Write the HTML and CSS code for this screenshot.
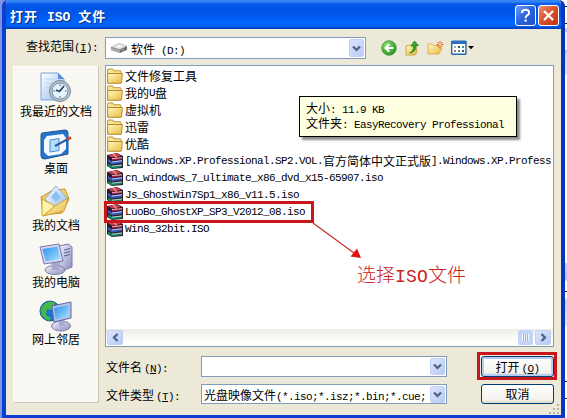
FILE: index.html
```html
<!DOCTYPE html>
<html lang="zh-CN">
<head>
    <meta charset="UTF-8">
    <title>打开 ISO 文件</title>
    <link rel="stylesheet" href="styles.css">
</head>
<body>
    <!-- Shared icons -->
    <svg class="defs" width="0" height="0">
        <defs>
            <linearGradient id="gold" x1="0" y1="0" x2="1" y2="1">
                <stop offset="0" stop-color="#fffbc4"/>
                <stop offset="1" stop-color="#e9b83c"/>
            </linearGradient>
            <linearGradient id="paper" x1="0" y1="0" x2="1" y2="1">
                <stop offset="0" stop-color="#ffffff"/>
                <stop offset="1" stop-color="#8fb9ec"/>
            </linearGradient>
            <linearGradient id="screen" x1="0" y1="0" x2="1" y2="1">
                <stop offset="0" stop-color="#2f8cf0"/>
                <stop offset="1" stop-color="#a5e6ff"/>
            </linearGradient>
            <linearGradient id="metal" x1="0" y1="0" x2="1" y2="1">
                <stop offset="0" stop-color="#f4f4ff"/>
                <stop offset="1" stop-color="#8a8dbb"/>
            </linearGradient>
            <radialGradient id="green" cx=".35" cy=".3" r=".8">
                <stop offset="0" stop-color="#8fe06c"/>
                <stop offset="1" stop-color="#1c8a20"/>
            </radialGradient>
            <symbol id="folder" viewBox="0 0 16 14" preserveAspectRatio="none">
                <path d="M.5 12.5V2Q.5 .8 1.5 .8H5.5L7 2.5H13Q14 2.5 14 3.5V12.5Z" fill="#f9e391" stroke="#b9953a" stroke-width=".9"/>
                <path d="M.7 13.3V5.5Q.7 4.8 1.5 4.8H14.5Q15.4 4.8 15.3 5.6L14.6 12.5Q14.5 13.3 13.6 13.3Z" fill="url(#gold)" stroke="#b3882a" stroke-width=".9"/>
            </symbol>
            <symbol id="archive" viewBox="0 0 16 16">
                <path d="M0 2L10 0L16 3V15L5 16L0 13Z" fill="#2a1a28"/>
                <path d="M1 2L10 .3L14 3L5 4.6Z" fill="#d63a63"/>
                <path d="M5 5L15 4V6L5 7.5Z" fill="#a31a48"/>
                <path d="M1 6L5 8.3L15 7V10L5 11.5L1 9Z" fill="#3a57b8"/>
                <path d="M5 9L15 7.7" stroke="#dfe6ff" stroke-width=".8"/>
                <path d="M1 10.5L5 12.5L15 11.3V14L5 15.5L1 13Z" fill="#138463"/>
                <path d="M5 13.2L15 12M5 5.7L15 4.7" stroke="#f2f2f2" stroke-width=".7"/>
                <path d="M6 1L9 3.6V5" stroke="#e0b13f" stroke-width="1.2" fill="none"/>
            </symbol>
            <symbol id="chevron" viewBox="0 0 9 7">
                <path d="M1 1.5L4.5 5L8 1.5" fill="none" stroke="#4d6185" stroke-width="2.2"/>
            </symbol>
        </defs>
    </svg>

    <div class="backdrop">
        <i class="tick t1"></i><i class="tick t2"></i><i class="tick t3"></i><i class="tick t4"></i><i class="tick t5"></i>
    </div>

    <div class="dialog">
        <!-- Title bar -->
        <header class="titlebar">
            <h1>打开 <span class="en">ISO</span> 文件</h1>
            <button class="win-btn help"><svg width="19" height="19" viewBox="0 0 19 19"><path d="M6 7Q6 3.8 9.6 3.8T13 7Q13 8.6 11.2 9.4Q9.6 10.2 9.6 12" fill="none" stroke="#fff" stroke-width="2"/><rect x="8.5" y="13.5" width="2.2" height="2.2" fill="#fff"/></svg></button>
            <button class="win-btn close"><svg width="19" height="19" viewBox="0 0 19 19"><path d="M5 5L14 14M14 5L5 14" stroke="#fff" stroke-width="2.3"/></svg></button>
        </header>

        <div class="client">
            <!-- Look in -->
            <div class="toolbar">
                <label>查找范围<span class="en">(<u>I</u>):</span></label>
                <div class="combo look-in">
                    <svg class="drive" width="17" height="12" viewBox="0 0 17 12"><path d="M0 5L8 1L16 4V8L9 11L0 8Z" fill="#6f7173"/><path d="M0 5L8 1L16 4L9 7.5Z" fill="#d8d9da"/><path d="M0 5.5L9 8V11L0 8Z" fill="#a8aaab"/><path d="M4 5L8 3L12 4L8.5 5.8Z" fill="#f7f7f7"/><rect x="11" y="7.5" width="2" height="1" fill="#8fd478"/></svg>
                    <span>软件<span class="en"> (D:)</span></span>
                    <button class="drop"><svg width="9" height="7"><use href="#chevron"/></svg></button>
                </div>
                <div class="tools">
                    <svg width="16" height="16" viewBox="0 0 16 16"><circle cx="8" cy="8" r="7.3" fill="url(#green)" stroke="#3d9a3a" stroke-width=".8"/><path d="M12.5 8H5M8.3 4.2L4.5 8L8.3 11.8" fill="none" stroke="#fff" stroke-width="2"/></svg>
                    <svg width="16" height="16" viewBox="0 0 16 16"><path d="M2 15V6L6 5L7 6L12 5L13 12L11 15Z" fill="url(#gold)" stroke="#c59a35" stroke-width=".8"/><path d="M5.5 13Q10 11 9.5 6H7L10.5 1L14.5 5.5H12Q12.5 12 5.5 13Z" fill="#35a82c" stroke="#1b751b" stroke-width=".7"/></svg>
                    <svg width="17" height="16" viewBox="0 0 17 16"><path d="M1 14V4H5L6.5 5.5H12V8H15L12 14Z" fill="url(#gold)" stroke="#d3a440" stroke-width=".8"/><path d="M13 1V8M9.5 4.5H16.5M10.5 2L15.5 7M15.5 2L10.5 7" stroke="#e8642c" stroke-width="1"/><circle cx="13" cy="4.5" r="1.3" fill="#ffd98a"/></svg>
                    <svg width="24" height="16" viewBox="0 0 24 16"><rect x=".7" y="1.2" width="14.2" height="13" rx=".8" fill="#fff" stroke="#2467ad" stroke-width="1.4"/><path d="M0 1H15.6V4H0Z" fill="#2b6fc0"/><path d="M3 6H5V8H3Z" fill="#a5b3b8"/><path d="M7 6H9V8H7ZM11 10H13V12H11Z" fill="#31567f"/><path d="M11 6H13V8H11ZM7 10H9V12H7Z" fill="#3f9a63"/><path d="M3 10H5V12H3Z" fill="#d66a50"/><path d="M17 6H23L20 9.2Z" fill="#000"/></svg>
                </div>
            </div>

            <div class="main">
                <!-- Places bar -->
                <nav class="places">
                    <a>
                        <svg width="34" height="34" viewBox="0 0 34 34"><path d="M2 2H19L25 8V29H2Z" fill="url(#paper)" stroke="#7ba3dc"/><path d="M19 2V8H25Z" fill="#5b8fdb"/><path d="M6 8H16M6 12H15M6 16H12M6 20H11" stroke="#c0d5f0"/><circle cx="21" cy="20" r="10.5" fill="#b9c0c9" stroke="#7b8794"/><circle cx="21" cy="20" r="8" fill="#e3f4ff" stroke="#7894ab"/><path d="M25 15L20.5 20.5L17 19" fill="none" stroke="#24445f" stroke-width="1.8"/><path d="M21 13.5V15M21 25V26.5M14.5 20H16M26 20H27.5" stroke="#446"/></svg>
                        <span>我最近的文档</span>
                    </a>
                    <a>
                        <svg width="34" height="34" viewBox="0 0 34 34"><path d="M3 5L26 2Q29 2 29 5V26L6 31Q2 31 2 28V8Q2 5 3 5Z" fill="#2475c8" stroke="#1a5299"/><path d="M8 8L24 6L27 10V21L22 26L9 28L5 24V12Z" fill="#f4faff"/><path d="M11 12L20 10.5V22.5L11 24Z" fill="#b7dcfa" stroke="#3c8fda"/><path d="M16 18L29 11" stroke="#285f9b" stroke-width="2"/><path d="M28 11.5L32 9.5" stroke="#d4482e" stroke-width="3"/></svg>
                        <span>桌面</span>
                    </a>
                    <a>
                        <svg width="34" height="34" viewBox="0 0 34 34"><path d="M2 12L14 5L26 4L30 14L23 28L4 30Z" fill="#f3cf66" stroke="#c3962f"/><path d="M6 14L17 1L28 13L17 26Z" fill="url(#paper)" stroke="#86b1dd"/><path d="M12 12L17 6L22 12L17 17Z" fill="#8cc1f2"/><path d="M3 14L16 21L4 31Q3 31 3 29Z" fill="#fff3a8" stroke="#cfa23a"/><path d="M16 21L29 13L25 26L4 31Z" fill="url(#gold)" stroke="#cfa23a"/></svg>
                        <span>我的文档</span>
                    </a>
                    <a>
                        <svg width="34" height="34" viewBox="0 0 34 34"><path d="M20 4L29 2L33 5V25L25 28L20 25Z" fill="url(#metal)" stroke="#7779a8"/><path d="M25 8L31 6.5M25 11L31 9.5M25 14L31 12.5" stroke="#555b95"/><ellipse cx="16" cy="28" rx="10" ry="4.5" fill="url(#metal)" stroke="#8083b2"/><path d="M12 20H19L20 28H13Z" fill="#a4a6cf"/><path d="M1 5L20 2L24 19L5 22Z" fill="#d7d9f2" stroke="#7476ab"/><path d="M3.5 7L18.5 4.5L21.5 17L6.5 19.5Z" fill="url(#screen)"/></svg>
                        <span>我的电脑</span>
                    </a>
                    <a>
                        <svg width="34" height="34" viewBox="0 0 34 34"><circle cx="11" cy="12" r="10" fill="#1e72d2" stroke="#16508e"/><path d="M3 7Q10 0 16 4L13 11L8 10L7 16L12 19L10 22Q1 18 1.5 11Z" fill="#46b84a"/><ellipse cx="22" cy="27" rx="9.5" ry="5" fill="url(#metal)" stroke="#7b7cad"/><path d="M20 19H25L26 27H20Z" fill="#a8a9d1"/><path d="M13 7L32 3V19L15 23Z" fill="#b5c5ea" stroke="#5b65a0"/><path d="M15 9L29.5 6V17.5L16.5 20.5Z" fill="url(#screen)"/></svg>
                        <span>网上邻居</span>
                    </a>
                </nav>

                <div class="right">
                    <!-- File list -->
                    <div class="file-list">
                        <ul>
                            <li><svg><use href="#folder"/></svg>文件修复工具</li>
                            <li><svg><use href="#folder"/></svg>我的<span class="en">U</span>盘</li>
                            <li><svg><use href="#folder"/></svg>虚拟机</li>
                            <li><svg><use href="#folder"/></svg>迅雷</li>
                            <li><svg><use href="#folder"/></svg>优酷</li>
                            <li><svg><use href="#archive"/></svg><span class="en">[Windows.XP.Professional.SP2.VOL.</span>官方简体中文正式版<span class="en">].Windows.XP.Profess:</span></li>
                            <li><svg><use href="#archive"/></svg><span class="en">cn_windows_7_ultimate_x86_dvd_x15-65907.iso</span></li>
                            <li><svg><use href="#archive"/></svg><span class="en">Js_GhostWin7Sp1_x86_v11.5.iso</span></li>
                            <li><svg><use href="#archive"/></svg><span class="en">LuoBo_GhostXP_SP3_V2012_08.iso</span></li>
                            <li><svg><use href="#archive"/></svg><span class="en">Win8_32bit.ISO</span></li>
                        </ul>
                        <div class="scrollbar">
                            <button class="drop left"><svg width="9" height="7"><use href="#chevron"/></svg></button>
                            <span class="thumb"></span>
                            <button class="drop next"><svg width="9" height="7"><use href="#chevron"/></svg></button>
                        </div>
                    </div>

                    <!-- File name and type -->
                    <div class="fields">
                        <label>文件名<span class="en key">(<u>N</u>):</span></label>
                        <div class="combo">
                            <button class="drop"><svg width="9" height="7"><use href="#chevron"/></svg></button>
                        </div>
                        <button class="push default">打开<span class="en key">(<u>O</u>)</span></button>
                        <label>文件类型<span class="en key">(<u>T</u>):</span></label>
                        <div class="combo">
                            <span class="type">光盘映像文件<span class="en">(*.iso;*.isz;*.bin;*.cue;</span></span>
                            <button class="drop"><svg width="9" height="7"><use href="#chevron"/></svg></button>
                        </div>
                        <button class="push">取消</button>
                    </div>
                </div>
            </div>
        </div>
        <svg class="grip" width="11" height="11" viewBox="0 0 11 11"><path d="M8 0H10V2H8ZM4 4H6V6H4ZM8 4H10V6H8ZM0 8H2V10H0ZM4 8H6V10H4ZM8 8H10V10H8Z" fill="#b8b4a2"/></svg>
    </div>

    <div class="tooltip">
        <p>大小<span class="en">: 11.9 KB</span></p>
        <p>文件夹<span class="en">: EasyRecovery Professional</span></p>
    </div>

    <!-- Red annotations -->
    <div class="mark mark-file"></div>
    <div class="mark mark-open"></div>
    <svg class="arrow" width="52" height="40" viewBox="0 0 52 40"><path d="M1 1L42 31" stroke="#c22a2a" stroke-width="1.1"/><path d="M49 36L38.5 34.5L45 26.5Z" fill="#e01010"/></svg>
    <div class="note">选择<span>ISO</span>文件</div>
</body>
</html>
```

FILE: styles.css
```css
/* General Styles */
* {
    box-sizing: border-box;
}

body {
    position: relative;
    width: 567px;
    height: 418px;
    margin: 0;
    padding: 0 2px;
    overflow: hidden;
    font-family: "Noto Sans CJK SC", sans-serif;
    font-size: 12px;
    line-height: 17px;
    color: #000;
    background: linear-gradient(to right, #7d94e6 50%, #fff 50%);
}

svg {
    flex: none;
    display: block;
}

button {
    padding: 0;
    font: inherit;
    color: inherit;
}

.defs {
    position: absolute;
}

/* Half-width letters next to the Chinese text */
.en {
    font-family: "Liberation Mono", monospace;
    font-size: 11px;
    line-height: 1;
    letter-spacing: -0.6px;
    white-space: pre;
}

.key {
    margin-left: 2px;
}

/* What shows of the window behind */
.backdrop {
    position: absolute;
    top: 0;
    right: 0;
    width: 4px;
    height: 418px;
    background: linear-gradient(#fff 28px, #c8c8f4 28px, #c8c8f4 32px, #f2f2fc 32px, #f2f2fc 50px, #b9b9ee 50px, #d4d4f6 56px, #e3e3f8 75px, #fff 75px, #fff 263px, #c6cff5 263px, #b9b9ee 280px, #fff 281px, #fff 298px, #c8c8f4 300px, #e3e3f8 326px, #fff 327px);
}

.tick {
    position: absolute;
    right: 0;
    width: 2px;
    height: 1px;
    background: #222;
}

.t1 { top: 6px; }
.t2 { top: 23px; }
.t3 { top: 291px; }
.t4 { top: 381px; }
.t5 { top: 398px; }

/* Dialog */
.dialog {
    position: relative;
    height: 418px;
    border-radius: 6px 6px 0 0;
    overflow: hidden;
    background: #ece9d8;
    border: solid #0831d9;
    border-width: 0 4px 3px;
    border-color: #0a3fd0 #0a35b8 #0a3fd0 #0a3fd0;
}

.titlebar {
    display: flex;
    align-items: center;
    height: 29px;
    margin: 0 -4px;
    padding: 2px 6px 0 8px;
    background: linear-gradient(#2b80f5 0, #3c8cf8 1px, #0a5be8 4px, #0054e3 9px, #0059ee 16px, #0066ff 23px, #0060f4 26px, #0038b8 29px);
}

.titlebar h1 {
    flex: 1;
    margin: 0;
    font-size: 13px;
    font-weight: bold;
    letter-spacing: 1px;
    white-space: pre;
    color: #fff;
    text-shadow: 1px 1px 1px #0a2f80;
}

.titlebar .en {
    margin: 0 4px 0 5px;
    font-size: 13px;
    letter-spacing: 0;
}

.win-btn {
    width: 21px;
    height: 21px;
    margin-left: 2px;
    border: 1px solid #fff;
    border-radius: 3px;
}

.help {
    background: linear-gradient(135deg, #6d9cf4, #2a62dd 50%, #1e50c9);
}

.close {
    background: linear-gradient(135deg, #e8917a, #dc5330 45%, #bb3310);
}

.client {
    padding: 8px 7px 0;
}

/* Look in row */
.toolbar {
    display: flex;
    height: 22px;
}

.toolbar label {
    width: 92px;
    padding-left: 13px;
    white-space: nowrap;
}

.combo {
    display: flex;
    align-items: center;
    background: #fff;
    border: 1px solid #7f9db9;
    padding: 0 1px 0 2px;
    white-space: nowrap;
    overflow: hidden;
}

.look-in {
    width: 261px;
}

.drive {
    margin: 0 3px;
}

.drop {
    flex: none;
    display: flex;
    align-items: center;
    justify-content: center;
    width: 15px;
    height: 18px;
    margin-left: auto;
    border: 1px solid #c3d0f6;
    border-radius: 2px;
    background: linear-gradient(135deg, #dbe5fd, #b9caf5);
}

.tools {
    display: flex;
    align-items: center;
    gap: 7px;
    padding-left: 15px;
}

/* Places bar and right column */
.main {
    display: flex;
    gap: 6px;
    padding-top: 6px;
}

.places {
    flex: none;
    display: flex;
    flex-direction: column;
    width: 86px;
    height: 337px;
    margin-top: 1px;
    padding-top: 4px;
    background: #faf8f3;
    border: 1px solid #fff;
    border-right-color: #cbc7b5;
    border-bottom-color: #cbc7b5;
}

.places a {
    display: flex;
    flex-direction: column;
    align-items: center;
    height: 57px;
    white-space: nowrap;
}

.places span {
    margin-top: -3px;
}

.right {
    flex: none;
    width: 449px;
}

.file-list {
    display: flex;
    flex-direction: column;
    height: 282px;
    border: 1px solid #7f9db9;
    background: #fff;
    overflow: hidden;
}

.file-list ul {
    flex: 1;
    list-style: none;
    margin: 0;
    padding: 1px 0 0 1px;
}

.file-list li {
    display: flex;
    align-items: center;
    height: 17px;
    white-space: nowrap;
}

.file-list li svg {
    width: 16px;
    height: 16px;
    margin-right: 2px;
}

.file-list .en {
    padding-top: 2px;
}

.scrollbar {
    display: flex;
    align-items: center;
    height: 17px;
    padding: 0 2px 0 1px;
    background: linear-gradient(#eeede5, #fefefb 70%);
}

.scrollbar .drop {
    width: 16px;
    height: 15px;
    margin: 0;
}

.left svg {
    transform: rotate(90deg);
}

.next svg {
    transform: rotate(-90deg);
}

.thumb {
    width: 15px;
    height: 15px;
    margin: 0 2px 0 auto;
    border: 4px solid #c4d3f9;
    border-radius: 2px;
    background: repeating-linear-gradient(to right, #eef4fe 0 1px, #98b0e8 1px 2px);
}

/* Bottom fields */
.fields {
    display: grid;
    grid-template-columns: 96px 246px 107px;
    grid-template-rows: 21px 20px;
    row-gap: 7px;
    padding-top: 9px;
}

.fields label {
    padding: 2px 0 0 1px;
    white-space: nowrap;
}

.fields .combo .drop {
    height: 17px;
}

.fields .push {
    margin-left: 34px;
}

.type {
    flex: 1;
}

.push {
    width: 73px;
    line-height: 16px;
    border: 1px solid #003c74;
    border-radius: 3px;
    background: linear-gradient(#fff, #f4f3ee 80%, #dcd8cc);
    white-space: nowrap;
}

.default {
    box-shadow: inset 0 0 0 2px #b5cdf5;
}

.grip {
    position: absolute;
    right: 1px;
    bottom: 0;
}

/* Tooltip */
.tooltip {
    position: absolute;
    left: 299px;
    top: 96px;
    width: 218px;
    height: 41px;
    padding: 3px 6px;
    line-height: 15px;
    background: #ffffe1;
    border: 1px solid #000;
    box-shadow: 3px 3px 2px rgba(0, 0, 0, 0.45);
    white-space: nowrap;
}

.tooltip p {
    margin: 0;
    height: 15px;
}

/* Annotations */
.mark {
    position: absolute;
    border: 3px solid #c9161a;
}

.mark-file {
    left: 104px;
    top: 201px;
    width: 210px;
    height: 22px;
}

.mark-open {
    left: 477px;
    top: 352px;
    width: 80px;
    height: 28px;
}

.arrow {
    position: absolute;
    left: 312px;
    top: 222px;
}

.note {
    position: absolute;
    left: 357px;
    top: 262px;
    font-size: 19px;
    font-weight: 300;
    line-height: 24px;
    color: #c8241c;
    white-space: nowrap;
}

.note span {
    font-family: "Liberation Mono", monospace;
    font-size: 18px;
    letter-spacing: 0.2px;
}
```
